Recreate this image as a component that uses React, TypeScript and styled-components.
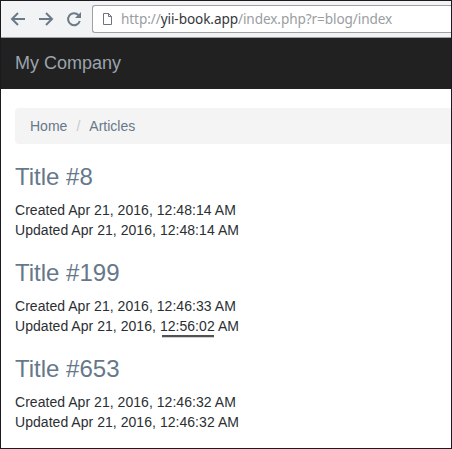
import React from 'react';
import styled, { createGlobalStyle } from 'styled-components';

const GlobalStyle = createGlobalStyle`
  * { box-sizing: border-box; }
  body { margin: 0; background: #fff; }
`;

const Window = styled.div`
  width: 452px;
  height: 449px;
  overflow: hidden;
  border: 1px solid #1c1a1e;
  background: #fff;
  font: 14px/20px "Liberation Sans", Arial, sans-serif;
  color: #2b2f33;
`;

const Toolbar = styled.div`
  display: flex;
  align-items: flex-start;
  height: 37px;
  padding-top: 4px;
  background: #f2f3f5;
  border-bottom: 1px solid #a2a3a6;
`;

const NavIcons = styled.svg`
  display: block;
  flex: none;
  width: 91px;
  height: 28px;
  fill: none;
  stroke: #6b7a89;
  stroke-width: 2;
`;

const AddressBar = styled.div`
  display: flex;
  align-items: center;
  flex: 1;
  height: 28px;
  padding-left: 10px;
  background: #fff;
  border: 1px solid #a0a1a5;
  border-right: 0;
  border-radius: 3px 0 0 3px;
`;

const PageIcon = styled.svg`
  flex: none;
  width: 9px;
  height: 12px;
  margin-right: 9px;
  fill: none;
  stroke: #6b7480;
`;

const Url = styled.span`
  font: 15px/24px "Noto Sans", sans-serif;
  padding-bottom: 2px;
  letter-spacing: -0.1px;
  white-space: pre;
  transform: scaleX(0.906);
  transform-origin: 0 50%;
  color: #9a9da1;
`;

const Host = styled.span`
  color: #34373b;
`;

const Navbar = styled.nav`
  display: flex;
  align-items: center;
  height: 51px;
  padding: 0 14px 1px;
  background: #212121;
  color: #9ba4ae;
  font-size: 18px;
`;

const Content = styled.main`
  padding: 19px 0 0 14px;
`;

const Breadcrumb = styled.div`
  display: flex;
  height: 36px;
  padding: 8px 15px;
  margin-bottom: 20px;
  border-radius: 4px 0 0 4px;
  background: #f4f4f4;
  color: #66788a;
`;

const Separator = styled.span`
  width: 22px;
  text-align: center;
  color: #c8c9cb;
`;

const Article = styled.article`
  margin-bottom: 20px;
`;

const Title = styled.h3`
  margin: 0 0 10px;
  font-size: 24px;
  font-weight: 400;
  line-height: 26px;
  color: #66788a;
`;

const Stamp = styled.div`
  white-space: pre;
  letter-spacing: 0.04px;
`;

const Time = styled.span<{ $marked?: boolean }>`
  position: relative;
  ${({ $marked }) =>
    $marked &&
    `&::after {
      content: '';
      position: absolute;
      left: 2px;
      right: 1px;
      bottom: -3px;
      height: 2px;
      background: #505256;
      box-shadow: 0 1px 0 #d2d2d2;
    }`}
`;

const articles = [
  { id: 8, created: '12:48:14', updated: '12:48:14' },
  { id: 199, created: '12:46:33', updated: '12:56:02', marked: true },
  { id: 653, created: '12:46:32', updated: '12:46:32' },
];

export default function App() {
  return (
    <Window>
      <GlobalStyle />
      <Toolbar>
        <NavIcons viewBox="0 0 91 28">
          <path d="M24 14H11.5M17 8l-6 6 6 6M38 14h12.5M45 8l6 6-6 6" />
          <path d="M77.4 10A6 6 0 1 0 78.8 16" />
          <path d="M80 7v6h-6z" fill="#6b7a89" stroke="none" />
        </NavIcons>
        <AddressBar>
          <PageIcon viewBox="0 0 9 12">
            <path d="M.5 .5h5l3 3v8h-8zM5.5 .5v3h3" />
          </PageIcon>
          <Url>
            http://<Host>yii-book.app</Host>/index.php?r=blog/index
          </Url>
        </AddressBar>
      </Toolbar>
      <Navbar>My Company</Navbar>
      <Content>
        <Breadcrumb>
          <span>Home</span>
          <Separator>/</Separator>
          <span>Articles</span>
        </Breadcrumb>
        {articles.map((a) => (
          <Article key={a.id}>
            <Title>Title #{a.id}</Title>
            <Stamp>
              Created Apr 21, 2016, <Time>{a.created}</Time> AM
            </Stamp>
            <Stamp>
              Updated Apr 21, 2016, <Time $marked={a.marked}>{a.updated}</Time> AM
            </Stamp>
          </Article>
        ))}
      </Content>
    </Window>
  );
}
